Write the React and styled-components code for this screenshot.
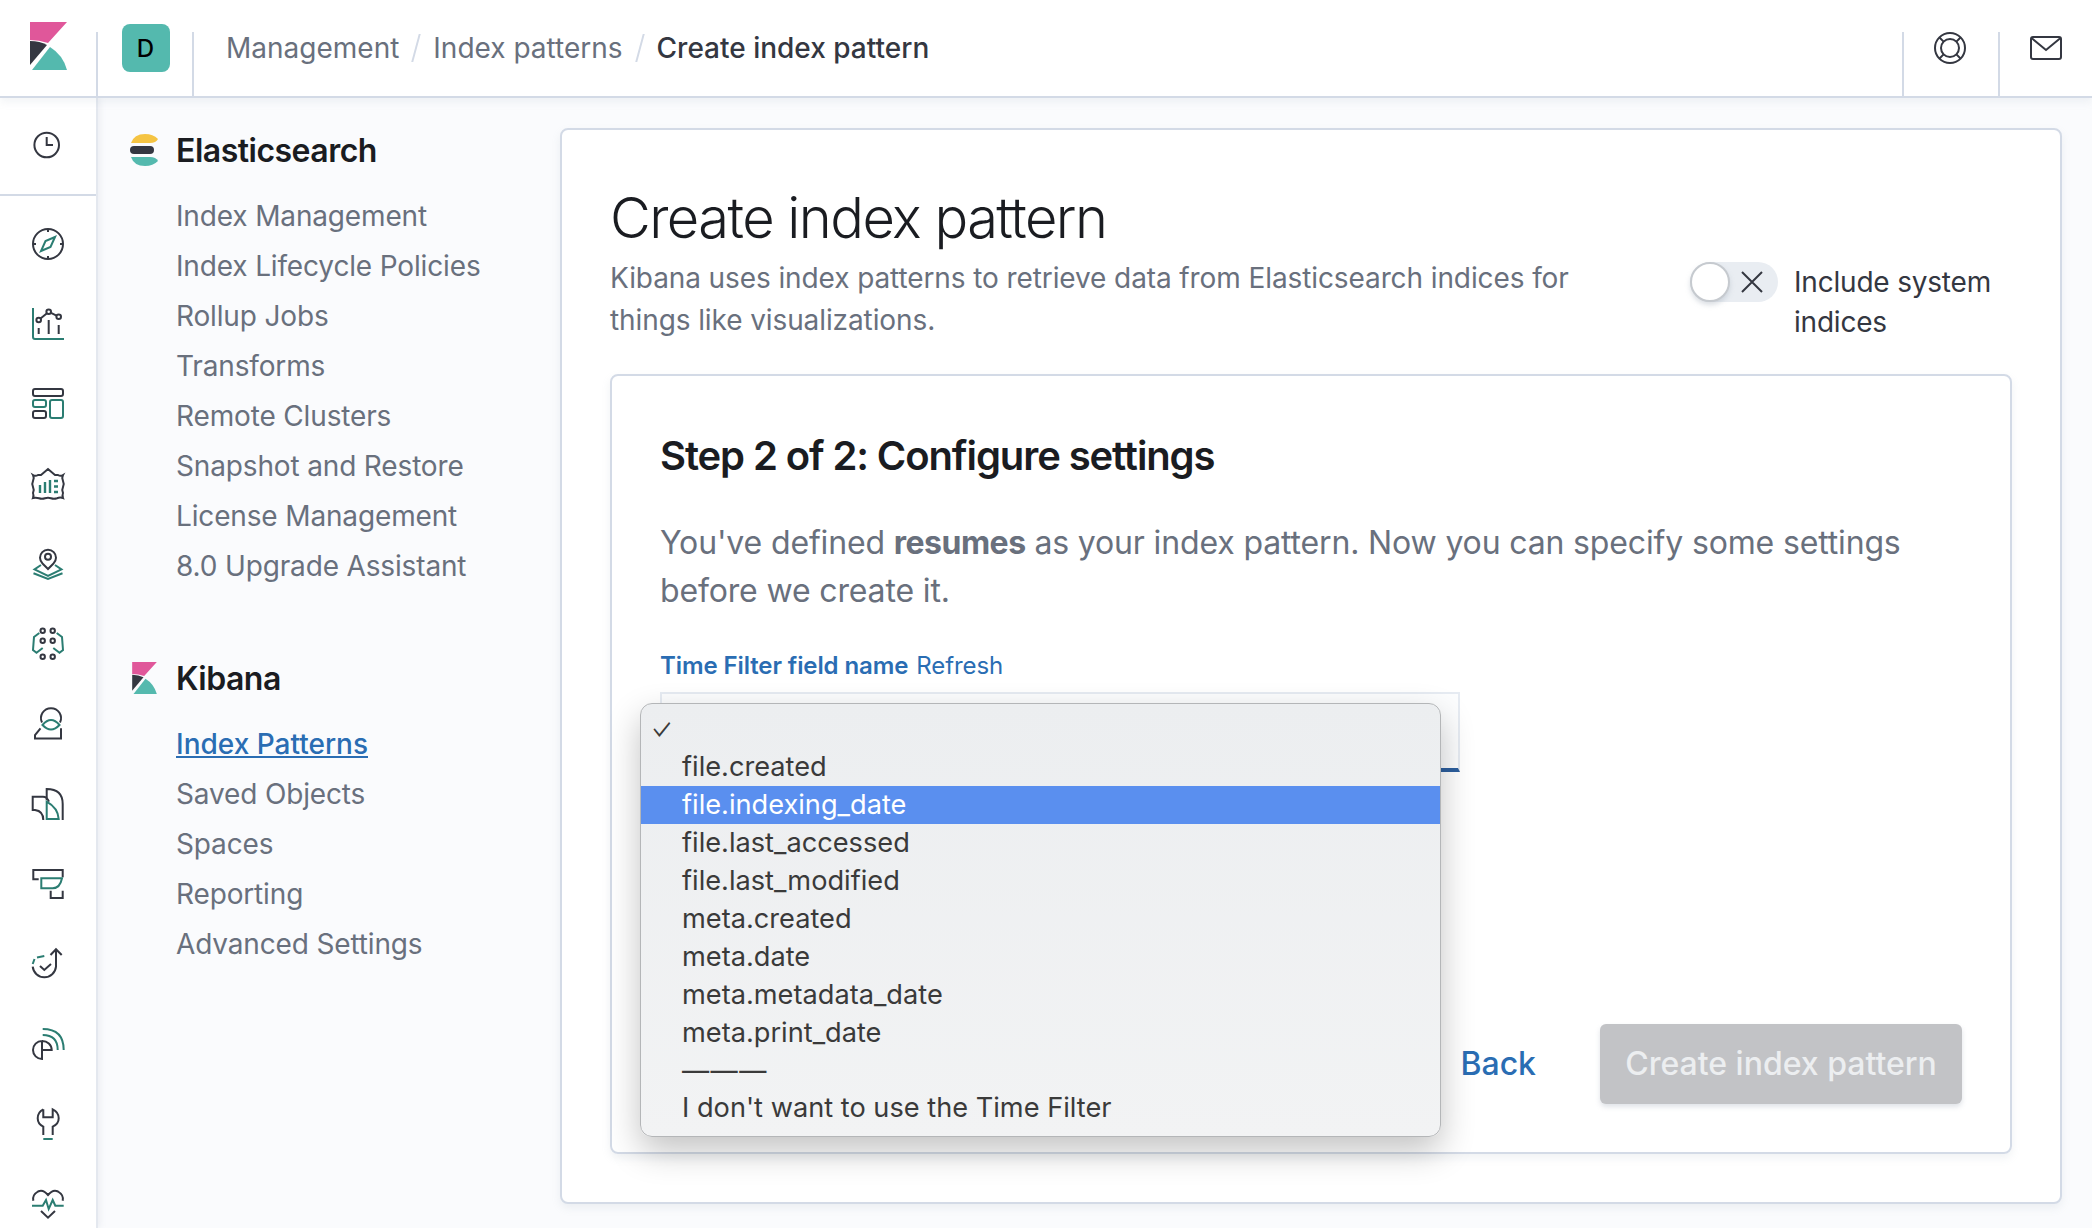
import React from "react";
import styled, { createGlobalStyle } from "styled-components";

const Global = createGlobalStyle`
  html, body { margin: 0; padding: 0; background: #fff; }
  body { font-family: Inter, "Liberation Sans", sans-serif; overflow: hidden; }
  * { box-sizing: border-box; }
`;

const Page = styled.div`
  width: 2092px;
  height: 1228px;
  overflow: hidden;
  display: flex;
  flex-direction: column;
  background: #fafbfd;
`;

const Header = styled.header`
  height: 98px;
  flex: none;
  display: flex;
  align-items: stretch;
  background: #fff;
  border-bottom: 2px solid #d3dae6;
  box-shadow: 0 4px 8px rgba(152, 162, 179, 0.12);
  position: relative;
  z-index: 2;
`;
const HeaderCell = styled.div`
  width: ${(p) => p.$w}px;
  flex: none;
  display: flex;
  align-items: center;
  justify-content: center;
  padding: 0 ${(p) => p.$right || 0}px 0 ${(p) => p.$left || 0}px;
`;
const LogoCell = styled(HeaderCell)`
  justify-content: flex-start;
  padding: 0 0 4px 30px;
`;
const HeaderDivider = styled.div`
  width: 2px;
  height: 64px;
  flex: none;
  align-self: flex-end;
  background: #d3dae6;
`;
const Avatar = styled.div`
  width: 48px;
  height: 48px;
  border-radius: 8px;
  background: #54b9ae;
  color: #000;
  display: flex;
  align-items: center;
  justify-content: center;
  font-size: 24px;
  font-weight: 500;
`;
const Breadcrumbs = styled.nav`
  flex: 1;
  display: flex;
  align-items: center;
  padding-left: 32px;
  font-size: 28px;
  color: #69707d;
`;
const Slash = styled.span`
  width: 2px;
  height: 28px;
  margin: 0 16px;
  background: #d3dae6;
  transform: skewX(-15deg);
`;
const CrumbCurrent = styled.span`
  color: #343741;
  font-weight: 500;
`;

const Body = styled.div`
  flex: 1;
  min-height: 0;
  display: flex;
`;
const LeftNav = styled.aside`
  width: 98px;
  flex: none;
  background: #fff;
  border-right: 2px solid #e4e8ef;
  box-shadow: 2px 0 6px rgba(152, 162, 179, 0.15);
  overflow: hidden;
`;
const Recent = styled.div`
  height: 98px;
  display: flex;
  align-items: center;
  justify-content: center;
  border-bottom: 2px solid #d3dae6;
  padding-bottom: 2px;
`;
const NavList = styled.div`
  padding-top: 8px;
`;
const NavItem = styled.div`
  height: 80px;
  display: flex;
  align-items: center;
  justify-content: center;
`;
const IconSvg = styled.svg`
  width: 32px;
  height: 32px;
  flex: none;
  fill: none;
  stroke-width: 2;
  overflow: visible;
`;

const SideNav = styled.nav`
  width: 462px;
  flex: none;
  padding: 30px 0 0 32px;
`;
const SideHeading = styled.div`
  display: flex;
  align-items: center;
  height: 44px;
  font-size: 32px;
  font-weight: 600;
  letter-spacing: -0.5px;
  color: #1a1c21;
  margin-top: ${(p) => p.$top || 0}px;
`;
const SideLogo = styled.span`
  width: 46px;
  flex: none;
  display: flex;
  align-items: center;
  padding-left: ${(p) => p.$pad || 0}px;
`;
const SideList = styled.div`
  margin-top: 19px;
  padding-left: 46px;
`;
const SideLink = styled.div`
  height: 50px;
  line-height: 50px;
  font-size: 28px;
  letter-spacing: ${(p) => (p.$active ? "0" : "-0.15px")};
  white-space: nowrap;
  color: ${(p) => (p.$active ? "#2a6db3" : "#69707d")};
  text-decoration: ${(p) => (p.$active ? "underline" : "none")};
  font-weight: ${(p) => (p.$active ? 500 : 400)};
`;

const Content = styled.main`
  flex: 1;
  min-width: 0;
  padding: 30px 30px 0 0;
`;
const OuterPanel = styled.section`
  height: 1076px;
  background: #fff;
  border: 2px solid #d3dae6;
  border-radius: 8px;
  box-shadow: 0 4px 8px rgba(152, 162, 179, 0.14);
  padding: 52px 48px 48px;
`;
const Title = styled.h1`
  margin: 0;
  font-size: 56px;
  line-height: 72px;
  font-weight: 300;
  letter-spacing: -1.55px;
  color: #1a1c21;
`;
const IntroRow = styled.div`
  display: flex;
  margin-top: 3px;
`;
const Intro = styled.p`
  margin: 0;
  width: 980px;
  flex: none;
  font-size: 28px;
  line-height: 42px;
  letter-spacing: -0.1px;
  color: #69707d;
`;
const SwitchGroup = styled.div`
  margin-left: auto;
  margin-top: 5px;
  width: 322px;
  display: flex;
  gap: 16px;
`;
const SwitchTrack = styled.div`
  width: 88px;
  height: 40px;
  flex: none;
  border-radius: 20px;
  background: #e9edf2;
  position: relative;
  display: flex;
  align-items: center;
  justify-content: flex-end;
  padding-right: 15px;
`;
const SwitchThumb = styled.div`
  position: absolute;
  left: 0;
  top: 0;
  width: 40px;
  height: 40px;
  border-radius: 50%;
  background: #fff;
  border: 2px solid #c6cacf;
  box-shadow: 0 3px 5px rgba(152, 162, 179, 0.35);
`;
const SwitchLabel = styled.div`
  font-size: 28px;
  line-height: 40px;
  letter-spacing: -0.2px;
  color: #343741;
`;
const InnerPanel = styled.section`
  margin-top: 32px;
  height: 780px;
  border: 2px solid #d3dae6;
  border-radius: 8px;
  box-shadow: 0 4px 8px rgba(152, 162, 179, 0.14);
  padding: 56px 48px 48px;
  display: flex;
  flex-direction: column;
`;
const StepTitle = styled.h2`
  margin: 0;
  font-size: 40px;
  line-height: 48px;
  font-weight: 600;
  letter-spacing: -1.1px;
  color: #1a1c21;
`;
const Lead = styled.p`
  margin: 39px 0 0;
  font-size: 32px;
  line-height: 48px;
  letter-spacing: -0.15px;
  color: #69707d;
  b {
    font-weight: 700;
    letter-spacing: -0.5px;
    color: #69707d;
  }
`;
const LabelRow = styled.div`
  margin-top: 33px;
  height: 36px;
  line-height: 36px;
  font-size: 24px;
  letter-spacing: -0.1px;
  color: #2a6db3;
  display: flex;
  gap: 8px;
`;
const LabelStrong = styled.span`
  font-weight: 600;
`;
const Field = styled.div`
  position: relative;
  margin-top: 8px;
  width: 800px;
  height: 80px;
  background: #fcfdfe;
  border: 2px solid #e6ebf2;
  border-bottom: 4px solid #2c5f9e;
`;
const Select = styled.div`
  position: absolute;
  left: -22px;
  top: 9px;
  width: 801px;
  height: 434px;
  padding: 6px 0 10px;
  border-radius: 12px;
  border: 1px solid #b4b6b8;
  background: linear-gradient(180deg, #eceef0, #f2f3f4);
  box-shadow: 0 14px 34px rgba(0, 0, 0, 0.24);
  font-family: Inter, "Liberation Sans", sans-serif;
  font-size: 27.2px;
  color: #3a3a3a;
  z-index: 3;
`;
const Option = styled.div`
  height: ${(p) => p.$h || 38}px;
  line-height: ${(p) => p.$h || 38}px;
  padding-left: 41px;
  position: relative;
  white-space: nowrap;
  background: ${(p) => (p.$on ? "#5a8fef" : "transparent")};
  color: ${(p) => (p.$on ? "#fff" : "#3a3a3a")};
`;
const Rule = styled(Option)`
  letter-spacing: 1.4px;
`;
const Check = styled.span`
  position: absolute;
  left: 7px;
  top: 0;
  font-size: 31px;
  font-weight: 300;
  transform: scaleX(0.8);
`;
const Footer = styled.div`
  margin-top: auto;
  display: flex;
  justify-content: flex-end;
  align-items: center;
  gap: 64px;
`;
const BackLink = styled.span`
  font-size: 32px;
  font-weight: 500;
  margin-bottom: 2px;
  color: #2a6db3;
`;
const PrimaryButton = styled.div`
  width: 362px;
  height: 80px;
  border-radius: 6px;
  background: #c2c3c6;
  color: #eceef0;
  font-size: 32px;
  font-weight: 500;
  padding-bottom: 2px;
  display: flex;
  align-items: center;
  justify-content: center;
  box-shadow: 0 3px 5px rgba(152, 162, 179, 0.3);
`;

const D = "#343741";
const T = "#2b7d72";

const KibanaLogo = ({ w, h }) => (
  <svg width={w} height={h} viewBox="0 0 37 48">
    <path d="M0 0H37L18 21Q9 18 0 18Z" fill="#e0579a" />
    <path d="M0 19Q10 19 17 23L0 43Z" fill="#343741" />
    <path d="M2 48L20 25Q33 33 37 48Z" fill="#54b9ae" />
  </svg>
);
const ElasticLogo = () => (
  <svg width="28" height="32" viewBox="0 0 28 32">
    <path d="M1 9Q4 0 15 0Q23 0 28 5Q26 9 20 9Z" fill="#f5c443" />
    <rect x="0" y="12" width="24" height="8" rx="4" fill="#343741" />
    <path d="M1 23H20Q26 23 28 27Q23 32 15 32Q4 32 1 23Z" fill="#54b9ae" />
  </svg>
);

const icons = {
  clock: (
    <>
      <circle cx="14.7" cy="16" r="12.3" stroke={D} />
      <path d="M14.7 8V16H21" stroke={D} />
    </>
  ),
  compass: (
    <>
      <circle cx="16" cy="16" r="15" stroke={D} />
      <path d="M16 1V4M16 28V31M1 16H4M28 16H31" stroke={D} />
      <path d="M23 9L18.5 19L9 23L13.5 13Z" stroke={T} />
    </>
  ),
  graph: (
    <>
      <path d="M1 0V29Q1 31 3 31H32" stroke={T} />
      <circle cx="6.7" cy="12" r="2.3" stroke={D} />
      <circle cx="16.7" cy="3.7" r="2.3" stroke={D} />
      <circle cx="26.7" cy="8.7" r="2.3" stroke={D} />
      <path d="M8.5 10.5L15 5.2M19 4.8L24.5 7.6" stroke={D} />
      <path d="M6.7 20V26M16.7 12V26M26.7 17V26" stroke={D} />
    </>
  ),
  dashboard: (
    <>
      <rect x="1" y="1" width="30" height="7" rx="2" stroke={D} />
      <rect x="1" y="12" width="13" height="7" rx="2" stroke={T} />
      <rect x="1" y="23" width="13" height="7" rx="2" stroke={D} />
      <rect x="18" y="12" width="13" height="18" rx="2" stroke={T} />
    </>
  ),
  canvas: (
    <>
      <path
        d="M9 7L16 1L23 7H26Q28.5 8.5 31 7Q29.5 10 31 13Q32.5 16 31 19Q29.5 22 31 25Q30 27.5 31 30Q28 29 25 30.2Q22 31.2 19 30.2Q16 29.2 13 30.2Q10 31.2 7 30.2Q4 29.2 1 30Q2 27.5 1 25Q2.5 22 1 19Q-.5 16 1 13Q2.5 10 1 7Q3.5 8.5 6 7Z"
        stroke={D}
      />
      <path d="M8 17V25M13 14V25M18 12V25M22 13H26M22 18.5H26M22 24H26" stroke={T} strokeWidth="2.4" />
    </>
  ),
  maps: (
    <>
      <path d="M16 21L10.5 15.5A8 8 0 1 1 21.5 15.5Z" stroke={D} />
      <circle cx="16" cy="8.7" r="3" stroke={D} />
      <path d="M9 17L2.5 21.3L16 28L29.5 21.3L23 17" stroke={T} />
      <path d="M1.5 25.3L16 31L30.5 25.3" stroke={T} />
    </>
  ),
  ml: (
    <>
      {[10.7, 20.7].map((x) =>
        [2.7, 12.7, 28.7].map((y) => <circle key={x + "-" + y} cx={x} cy={y} r="2.2" stroke={D} />)
      )}
      <path d="M7.3 5L2 9L1 22L4.5 24.7L10.7 20" stroke={T} />
      <path d="M24.7 5L30 9L31 22L27.5 24.7L21.3 20" stroke={T} />
    </>
  ),
  uptime: (
    <>
      <path d="M10 14.5A10 10 0 1 1 28 14.5" stroke={D} />
      <path d="M8.5 20.3L3 27V30.5H29V20.3" stroke={D} />
      <path d="M10.5 17Q19 7 27.5 17Q19 26 10.5 17Z" stroke={T} />
    </>
  ),
  security: (
    <>
      <path d="M17 13.7Q15 8.7 11 8.7H.7V22H3Q11.3 23 11.3 32" stroke={D} />
      <path d="M14.7 12V1Q30.7 1 30.7 16V32" stroke={D} />
      <path d="M14.7 13.7V31H26.7Q26 20 14.7 13.7Z" stroke={T} />
    </>
  ),
  dev: (
    <>
      <path d="M30.7 9.3V2H1.3V11.3H6.7" stroke={D} />
      <path d="M18.7 22.7V30H30.7V22.7" stroke={D} />
      <path d="M30 10.3H9.3V20.3H20.7Q28 20.3 30 10.3Z" stroke={T} />
    </>
  ),
  stack: (
    <>
      <path d="M18.5 7L24 1.3L29.7 7M24 1.3V18.7A11.7 11.7 0 0 1 .7 18.7" stroke={D} />
      <path d="M8 18L12.3 22L19 16" stroke={D} />
      <path d="M.7 16L2.5 11M5 9.5L12.3 8" stroke={T} />
    </>
  ),
  monitoring: (
    <>
      <path d="M10 13A9 9 0 0 0 10 31ZM10 13A9.5 9 0 0 1 19.7 22H10" stroke={D} />
      <path d="M10.7 1Q31.7 1 31.7 22" stroke={T} />
      <path d="M10.7 7Q25.7 7 25.7 22" stroke={T} />
    </>
  ),
  management: (
    <>
      <path d="M11.3 1.3V9.3H20.7V1.3Q26.7 4 26.7 10.3Q26.7 16 20.7 18.7V27M11.3 1.3Q5.7 4 5.7 10.3Q5.7 16 11.3 18.7V27" stroke={D} />
      <path d="M11.3 31H20.7" stroke={T} />
    </>
  ),
  heart: (
    <>
      <path d="M1.3 12.7Q0 7 6 3.5Q11 .8 16 7Q21 .8 26 3.5Q32 7 30.7 12.7" stroke={D} />
      <path d="M0 17.7H10.7L14 12L16.7 21L20.7 12L23.3 17.7H31.7" stroke={T} />
      <path d="M9 23L16 29.7L23 23" stroke={D} />
    </>
  ),
};

const NavIcon = ({ name }) => <IconSvg viewBox="0 0 32 32">{icons[name]}</IconSvg>;

const navNames = ["compass", "graph", "dashboard", "canvas", "maps", "ml", "uptime", "security", "dev", "stack", "monitoring", "management", "heart"];
const esLinks = ["Index Management", "Index Lifecycle Policies", "Rollup Jobs", "Transforms", "Remote Clusters", "Snapshot and Restore", "License Management", "8.0 Upgrade Assistant"];
const kbLinks = ["Saved Objects", "Spaces", "Reporting", "Advanced Settings"];
const options = ["file.created", "file.indexing_date", "file.last_accessed", "file.last_modified", "meta.created", "meta.date", "meta.metadata_date", "meta.print_date"];

export default function App() {
  return (
    <Page>
      <Global />
      <Header>
        <LogoCell $w={96}>
          <KibanaLogo w={37} h={48} />
        </LogoCell>
        <HeaderDivider />
        <HeaderCell $w={94} $left={1}>
          <Avatar>D</Avatar>
        </HeaderCell>
        <HeaderDivider />
        <Breadcrumbs>
          <span>Management</span>
          <Slash />
          <span>Index patterns</span>
          <Slash />
          <CrumbCurrent>Create index pattern</CrumbCurrent>
        </Breadcrumbs>
        <HeaderDivider />
        <HeaderCell $w={94} $right={2}>
          <IconSvg viewBox="0 0 32 32">
            <circle cx="16" cy="16" r="15" stroke={D} />
            <circle cx="16" cy="16" r="9" stroke={D} />
            <path d="M5.5 5.5L9.6 9.6M26.5 5.5L22.4 9.6M5.5 26.5L9.6 22.4M26.5 26.5L22.4 22.4" stroke={D} />
          </IconSvg>
        </HeaderCell>
        <HeaderDivider />
        <HeaderCell $w={92}>
          <IconSvg viewBox="0 0 32 32">
            <rect x="1" y="5" width="30" height="22" rx="2" stroke={D} />
            <path d="M1.5 6L16 18L30.5 6" stroke={D} />
          </IconSvg>
        </HeaderCell>
      </Header>
      <Body>
        <LeftNav>
          <Recent>
            <NavIcon name="clock" />
          </Recent>
          <NavList>
            {navNames.map((n) => (
              <NavItem key={n}>
                <NavIcon name={n} />
              </NavItem>
            ))}
          </NavList>
        </LeftNav>
        <SideNav>
          <SideHeading>
            <SideLogo>
              <ElasticLogo />
            </SideLogo>
            Elasticsearch
          </SideHeading>
          <SideList>
            {esLinks.map((l) => (
              <SideLink key={l}>{l}</SideLink>
            ))}
          </SideList>
          <SideHeading $top={65}>
            <SideLogo $pad={2}>
              <KibanaLogo w={25} h={32} />
            </SideLogo>
            Kibana
          </SideHeading>
          <SideList>
            <SideLink $active>Index Patterns</SideLink>
            {kbLinks.map((l) => (
              <SideLink key={l}>{l}</SideLink>
            ))}
          </SideList>
        </SideNav>
        <Content>
          <OuterPanel>
            <Title>Create index pattern</Title>
            <IntroRow>
              <Intro>Kibana uses index patterns to retrieve data from Elasticsearch indices for things like visualizations.</Intro>
              <SwitchGroup>
                <SwitchTrack>
                  <SwitchThumb />
                  <svg width="22" height="22" viewBox="0 0 22 22" fill="none" stroke={D} strokeWidth="2">
                    <path d="M1 1L21 21M21 1L1 21" />
                  </svg>
                </SwitchTrack>
                <SwitchLabel>Include system indices</SwitchLabel>
              </SwitchGroup>
            </IntroRow>
            <InnerPanel>
              <StepTitle>Step 2 of 2: Configure settings</StepTitle>
              <Lead>
                You've defined <b>resumes</b> as your index pattern. Now you can specify some settings before we create it.
              </Lead>
              <LabelRow>
                <LabelStrong>Time Filter field name</LabelStrong>
                <span>Refresh</span>
              </LabelRow>
              <Field>
                <Select>
                  <Option>
                    <Check>✓</Check>
                  </Option>
                  {options.map((o) => (
                    <Option key={o} $on={o === "file.indexing_date"}>
                      {o}
                    </Option>
                  ))}
                  <Rule $h={37}>———</Rule>
                  <Option>I don't want to use the Time Filter</Option>
                </Select>
              </Field>
              <Footer>
                <BackLink>Back</BackLink>
                <PrimaryButton>Create index pattern</PrimaryButton>
              </Footer>
            </InnerPanel>
          </OuterPanel>
        </Content>
      </Body>
    </Page>
  );
}
